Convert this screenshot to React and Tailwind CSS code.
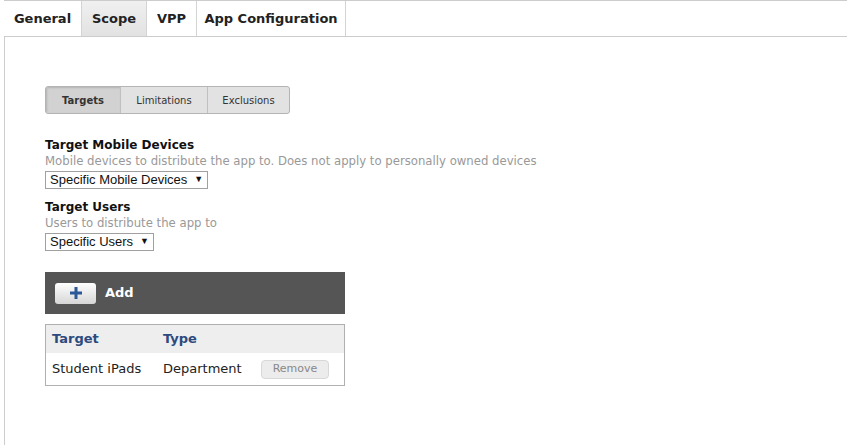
export default function App() {
  const v = { fontFamily: '"DejaVu Sans", Verdana, sans-serif' };
  const a = { fontFamily: '"Liberation Sans", Arial, sans-serif' };
  return (
    <div className="w-[847px] h-[445px] bg-white overflow-hidden relative" style={v}>
      <div className="flex h-[37px] border-t border-b border-[#cccccc] ml-[4px]">
        <div className="w-[78px] flex items-center justify-center text-[13px] font-bold text-[#222] border-r border-[#d4d4d4] bg-white">General</div>
        <div className="w-[65px] flex items-center justify-center text-[13px] font-bold text-[#222] border-r border-[#d4d4d4] bg-gradient-to-b from-[#f0f0f0] to-[#e2e2e2]">Scope</div>
        <div className="w-[50px] flex items-center justify-center text-[13px] font-bold text-[#222] border-r border-[#d4d4d4] bg-white">VPP</div>
        <div className="w-[149px] flex items-center justify-center text-[13px] font-bold text-[#222] border-r border-[#d4d4d4] bg-white">App Configuration</div>
      </div>
      <div className="ml-[4px] border-l border-[#cccccc] h-[408px] pl-[40px] pt-[49px]">
        <div className="flex w-[245px] h-[28px] rounded-[3px] border border-[#b4b4b4] bg-[#e2e2e2] overflow-hidden text-[10px] text-[#333]">
          <div className="w-[75px] flex items-center justify-center font-bold bg-[#d2d2d2] border-r border-[#c0c0c0] shadow-[inset_1px_1px_2px_rgba(0,0,0,0.15)]">Targets</div>
          <div className="w-[87px] flex items-center justify-center border-r border-[#c0c0c0]">Limitations</div>
          <div className="flex-1 flex items-center justify-center">Exclusions</div>
        </div>
        <div className="mt-[23px] text-[12px] font-bold text-[#111] leading-[16px]">Target Mobile Devices</div>
        <div className="text-[11.7px] text-[#999] leading-[16px]">Mobile devices to distribute the app to. Does not apply to personally owned devices</div>
        <div className="mt-[2px] flex w-fit items-center h-[18px] border border-[#a0a0a0] px-[4px] text-[13px] text-[#111] gap-[7px]" style={a}>
          <span>Specific Mobile Devices</span><span className="text-[9px]">▼</span>
        </div>
        <div className="mt-[10px] text-[12px] font-bold text-[#111] leading-[16px]">Target Users</div>
        <div className="text-[11.7px] text-[#999] leading-[16px]">Users to distribute the app to</div>
        <div className="mt-[2px] flex w-fit items-center h-[18px] border border-[#a0a0a0] px-[4px] text-[13px] text-[#111] gap-[7px]" style={a}>
          <span>Specific Users</span><span className="text-[9px]">▼</span>
        </div>
        <div className="mt-[21px] w-[300px] h-[42px] bg-[#555555] flex items-center pl-[10px]">
          <div className="w-[41px] h-[21px] rounded-[3px] bg-gradient-to-b from-[#ffffff] to-[#d6d6d6] flex items-center justify-center">
            <svg width="14" height="14" viewBox="0 0 14 14"><path d="M7 1v12M1 7h12" stroke="#2b5797" strokeWidth="3" /></svg>
          </div>
          <span className="ml-[9px] text-[13px] font-bold text-white">Add</span>
        </div>
        <div className="mt-[10px] w-[300px] border border-[#b0b0b0] text-[13px]">
          <div className="flex h-[28px] items-center bg-[#eeeeee] font-bold text-[#2c4a7e]">
            <div className="w-[117px] pl-[6px]">Target</div>
            <div>Type</div>
          </div>
          <div className="flex h-[32px] items-center text-[#222]">
            <div className="w-[117px] pl-[6px]">Student iPads</div>
            <div className="w-[98px]">Department</div>
            <div className="w-[68px] h-[19px] rounded-[4px] border border-[#d8d8d8] bg-[#ececec] text-[11px] text-[#888] flex items-center justify-center">Remove</div>
          </div>
        </div>
      </div>
    </div>
  );
}
